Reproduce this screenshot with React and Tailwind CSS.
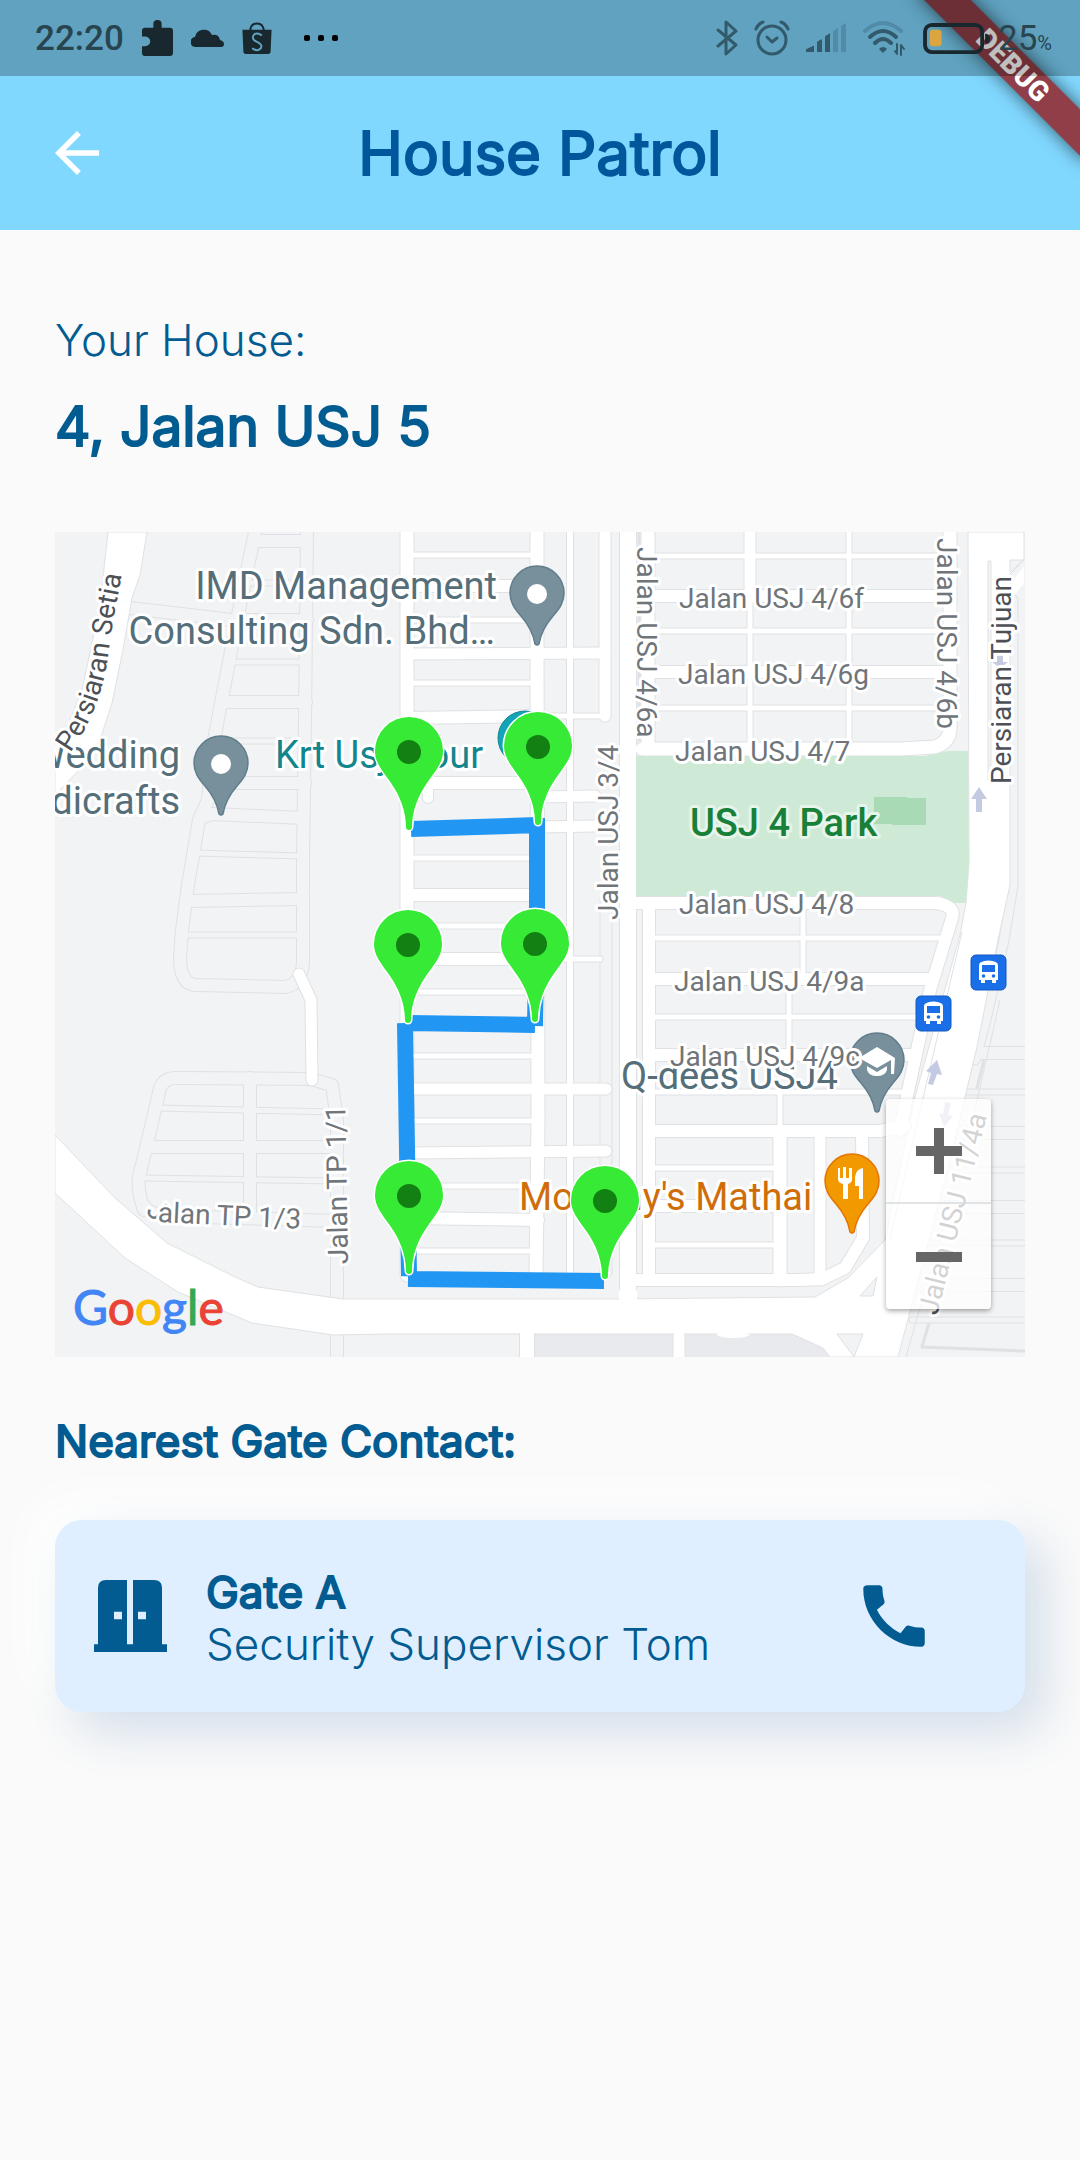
import React from "react";

const GROUND = "#f1f3f4";
const CASING = "#dfe1e4";

const STREETS = [
  // west block
  ["M407 532V1275", 13],
  ["M537 532V640L538 1120L536 1276", 13],
  ["M570 532V1276", 6],
  ["M605 532V716", 11],
  ["M628 532V1305", 16],
  ["M407 555H538", 5],
  ["M407 586H538", 12],
  ["M407 620H538", 5],
  ["M407 654L605 653", 11],
  ["M407 683H538", 5],
  ["M407 718L538 716", 12],
  ["M538 716H605", 5],
  ["M430 783H538", 12],
  ["M428 770V798", 10],
  ["M538 797L595 796", 11],
  ["M407 829L595 826", 11],
  ["M407 858H538", 5],
  ["M407 895H538", 12],
  ["M407 926H538", 5],
  ["M407 959H538", 12],
  ["M538 959H600", 5],
  ["M407 992H538", 5],
  ["M407 1024H538", 13],
  ["M407 1056H538", 5],
  ["M407 1089H606", 11],
  ["M407 1121H538", 5],
  ["M407 1153L606 1151", 11],
  ["M407 1186H538", 5],
  ["M407 1218L538 1220", 12],
  ["M407 1251H538", 5],
  // north-east block
  ["M648 532V749", 13],
  ["M642 749H900L935 747Q950 742 950 728V532", 13],
  ["M655 556H944", 5],
  ["M655 596H944", 12],
  ["M655 631H944", 5],
  ["M655 672H944", 12],
  ["M655 708H944", 5],
  ["M750 532V596", 11],
  ["M750 596V745", 5],
  ["M849 532V745", 5],
  // south-east block
  ["M649 903V1280", 12],
  ["M636 903H936Q956 906 952 918L930 990L905 1105L900 1130", 12],
  ["M655 938H940", 5],
  ["M655 979H932", 12],
  ["M655 1017H920", 5],
  ["M655 1055H914", 12],
  ["M655 1092H906", 5],
  ["M655 1131H880L905 1126", 12],
  ["M655 1168H780", 5],
  ["M655 1206H780", 12],
  ["M655 1245H780", 5],
  ["M628 1280H800L822 1279L845 1268L863 1238L862 1131", 12],
  ["M803 905V979", 5],
  ["M789 979V1055", 5],
  ["M780 1092V1131", 5],
  ["M780 1131V1280", 13],
  ["M820 1131V1280", 11],
  // south of the highway
  ["M527 1320V1360", 14],
  ["M679 1320V1360", 11],
];

const LANES = [
  ["M130 608L232 620", 12],
  ["M255 532L238 615L214 740L208 800L199 820L188 885L182 930L180 958Q180 984 196 985L285 987Q302 984 303 962L303 860L305 720L307 532", 12],
  ["M200 818L212 814L303 818", 12],
  ["M255 541H307", 12],
  ["M245 583H307", 5],
  ["M238 620H307", 12],
  ["M232 662H307", 5],
  ["M226 702H306", 12],
  ["M220 741H305", 5],
  ["M212 783H305", 12],
  ["M196 853L303 856", 5],
  ["M188 901L303 899", 12],
  ["M184 935H303", 5],
  ["M144 1210Q137 1190 139 1177L148 1140L160 1088Q164 1078 176 1078L310 1079L332 1085L337 1120V1360", 12],
  ["M144 1206Q152 1216 170 1216L337 1221", 12],
  ["M250 1078V1218", 12],
  ["M156 1108L337 1112", 5],
  ["M148 1147H337", 12],
  ["M142 1178L337 1181", 5],
  ["M606 900V1272", 11],
  ["M639 532V740", 1],
  ["M974 1053H1024", 12],
  ["M984 1060L976 1092", 1],
  ["M968 1092H1024", 5],
  ["M958 1133H1024", 12],
  ["M950 1170H1024", 5],
  ["M940 1207H1024", 12],
  ["M930 1243H1024", 5],
  ["M920 1285H1024", 12],
  ["M912 1320H1024", 5],
  ["M929 1323L922 1347L1024 1351", 1],
  ["M1013 600V885L1004 940L986 1020L975 1060", 9],
];

const HIGHWAYS = [
  "M108 532L100 605L82 690L70 720L55 747V795L83 766L100 740L112 703L123 650L132 598L140 575L147 532Z",
  "M55 1135L115 1198L167 1243L237 1278L258 1287L343 1299H620L815 1297L848 1278L885 1240L915 1097L960 935L966 903L969 863L968 532H1024V560L1010 574V885L998 940L977 1047L950 1160L898 1357H830L823 1348L792 1334H390L333 1335L252 1323L178 1292L125 1258L55 1193Z",
];

const ROAD_LABELS = [
  ["Jalan USJ 4/6f", 679, 608],
  ["Jalan USJ 4/6g", 678, 684],
  ["Jalan USJ 4/7", 675, 761],
  ["Jalan USJ 4/8", 679, 914],
  ["Jalan USJ 4/9a", 674, 991],
  ["Jalan USJ 4/9c", 670, 1066],
];

const TURNED_LABELS = [
  ["Jalan USJ 4/6a", 637, 547, 90, "#70757a"],
  ["Jalan USJ 4/6b", 937, 538, 90, "#70757a"],
  ["Jalan USJ 3/4", 618, 920, -90, "#70757a"],
  ["Jalan TP 1/1", 348, 1264, -91, "#70757a"],
  ["Persiaran Tujuan", 1011, 784, -90, "#4d5156"],
  ["Jalan USJ 11/4a", 937, 1316, -76, "#4d5156"],
];

const ROUTE = "M411 829L538 825M537 818V907L535 1026M409 1023L535 1025M405 1023L409 1276M408 1279L604 1281";

const PATROL_POINTS = [
  [409, 829],
  [538, 824],
  [408, 1022],
  [535, 1021],
  [409, 1273],
  [605, 1278],
];

function Roads({ roads, fill }) {
  return (
    <g fill="none" strokeLinejoin="round" strokeLinecap="round">
      {roads.map(([d, w], i) => (
        <path key={i} d={d} stroke={CASING} strokeWidth={w + 2} />
      ))}
      {roads.map(([d, w], i) => (
        <path key={i} d={d} stroke={w === 1 ? CASING : fill} strokeWidth={w} />
      ))}
    </g>
  );
}

function PlacePin({ x, y, fill, edge, children }) {
  return (
    <g transform={`translate(${x} ${y})`}>
      <path
        d="M-2 -1C-4 -13 -9 -21 -16 -29C-23 -37 -27 -43 -27 -52A27 27 0 0 1 27 -52C27 -43 23 -37 16 -29C9 -21 4 -13 2 -1Q0 1 -2 -1Z"
        fill={fill}
        stroke={edge}
        strokeWidth="1.5"
      />
      {children}
    </g>
  );
}

function PatrolPin({ x, y }) {
  return (
    <g transform={`translate(${x} ${y})`}>
      <path
        d="M-3 -2C-3 -18 -9 -33 -18 -46C-28 -60 -34 -67 -34 -78A34 34 0 0 1 34 -78C34 -67 28 -60 18 -46C9 -33 3 -18 3 -2A3 3 0 0 1 -3 -2Z"
        fill="#36ea36"
        stroke="#fff"
        strokeWidth="3"
        paintOrder="stroke"
      />
      <circle cy="-77" r="12" fill="#128012" />
    </g>
  );
}

function BusStop({ x, y }) {
  return (
    <g transform={`translate(${x} ${y})`}>
      <rect width="35" height="35" rx="5" fill="#1a6fe8" stroke="#1558c0" />
      <path d="M8 10Q8 6 17.500 5.500Q27 6 27 10V25H25V28H21V25H14V28H10V25H8Z" fill="#fff" />
      <rect x="11" y="10" width="13" height="7" fill="#1a6fe8" />
      <circle cx="12.500" cy="21" r="1.800" fill="#1a6fe8" />
      <circle cx="22.500" cy="21" r="1.800" fill="#1a6fe8" />
    </g>
  );
}

function PatrolMap() {
  return (
    <svg
      viewBox="55 532 970 825"
      className="block h-auto w-full font-[Roboto,sans-serif]"
      role="img"
      aria-label="Patrol route map"
    >
      <rect x="55" y="532" width="970" height="825" fill={GROUND} />
      <path d="M534 1334H673V1357H534ZM684 1334H792L823 1348L830 1357H684Z" fill="#e8eaed" />
      <Roads roads={LANES} fill={GROUND} />
      <g fill="#fff" stroke={CASING} strokeWidth="1">
        {HIGHWAYS.map((d) => (
          <path key={d} d={d} />
        ))}
      </g>
      <Roads roads={STREETS} fill="#fff" />
      <path d="M636 756H925L948 751H968L969 863L966 903H955L940 896H636Z" fill="#ceead6" />
      <path d="M874 797H907V798H926V825H892V824H874Z" fill="#a8dab5" />
      <Roads roads={[["M299 974L311 1000L312 1080", 11]]} fill="#fff" />
      <path d="M391 1300H619V1333H391ZM636 1300H810V1333H636Z" fill="#fff" />
      <path d="M519 1318H535V1333H519ZM672 1318H686V1333H672ZM619 1290H637V1320H619Z" fill="#fff" />
      <path d="M877 1277L860 1296H873ZM837 1334H863L854 1357ZM988 561H991V780H988ZM1010 560H1024L1010 572Z" fill={GROUND} stroke={CASING} />
      <path d="M716 1334Q724 1330 732 1331L750 1334Q748 1338 732 1338Q720 1338 716 1334Z" fill="#fff" />
      <path d="M1024 566L1013 580V596L1024 584Z" fill="#fff" />
      <path d="M962 932L912 1145L890 1238M1000 1000L968 1140L906 1357" fill="none" stroke={CASING} />
      <g fill="#c5cae3">
        <path d="M979 787L987 799H982V812H976V799H971Z" />
        <path d="M937 1060L942 1075L937 1074L933 1085L928 1084L931 1073L926 1071Z" />
        <path d="M997 655H1003V662H1008L1000 668L992 662H997Z" />
        <path d="M945 1102L951 1103L948 1115L953 1116L944 1127L939 1113L943 1114Z" />
      </g>

      <g fontSize="38" fill="#546e7a" stroke="#fff" strokeWidth="6" strokeLinejoin="round" paintOrder="stroke">
        <text x="497" y="599" textAnchor="end">IMD Management</text>
        <text x="495" y="644" textAnchor="end">Consulting Sdn. Bhd…</text>
        <text x="180" y="768" textAnchor="end">Wedding</text>
        <text x="180" y="814" textAnchor="end">Handicrafts</text>
        <text x="621" y="1089">Q-dees USJ4</text>
        <text x="275" y="768" fill="#12858d">{"Krt Usj\u00a0\u00a0Tour"}</text>
        <text x="519" y="1210" fill="#cf6d0a">Moorthy's Mathai</text>
        <text x="690" y="836" fill="#188038" stroke="#e6f4ea" fontWeight="500">USJ 4 Park</text>
      </g>

      <PlacePin x={537} y={645} fill="#78909c" edge="#607d8b">
        <circle cy="-51" r="10" fill="#fff" />
      </PlacePin>
      <PlacePin x={221} y={815} fill="#78909c" edge="#607d8b">
        <circle cy="-51" r="10" fill="#fff" />
      </PlacePin>
      <circle cx="525" cy="738" r="27" fill="#12a4b8" stroke="#12858d" />
      <PlacePin x={877} y={1112} fill="#78909c" edge="#607d8b">
        <path d="M0 -65L18 -54L17 -38H14V-52L0 -44L-18 -54ZM-10 -46L0 -40L10 -46V-42Q8 -36 0 -36Q-8 -36 -10 -42Z" fill="#fff" />
      </PlacePin>
      <PlacePin x={852} y={1233} fill="#f29900" edge="#e37400">
        <path d="M-14 -65H-12V-55H-9V-66H-6V-55H-3V-65H0V-54Q0 -50 -4 -49V-34H-9V-49Q-14 -50 -14 -54ZM11 -65V-34H7V-47H3V-56Q4 -64 11 -65Z" fill="#fff" />
      </PlacePin>

      <g fontSize="28" fill="#70757a" stroke="#fff" strokeWidth="6" strokeLinejoin="round" paintOrder="stroke">
        {ROAD_LABELS.map(([name, x, y]) => (
          <text key={name} x={x} y={y}>{name}</text>
        ))}
        {TURNED_LABELS.map(([name, x, y, angle, fill]) => (
          <text key={name} transform={`translate(${x} ${y}) rotate(${angle})`} fill={fill}>{name}</text>
        ))}
        <path id="setia-line" d="M70 753C92 722 104 690 109 650S118 600 125 555" fill="none" stroke="none" />
        <text fill="#4d5156">
          <textPath href="#setia-line">Persiaran Setia</textPath>
        </text>
        <path id="tp-line" d="M145 1213L157 1222L330 1230" fill="none" stroke="none" />
        <text>
          <textPath href="#tp-line">Jalan TP 1/3</textPath>
        </text>
      </g>

      <BusStop x={971} y={955} />
      <BusStop x={916} y={996} />

      <path d={ROUTE} fill="none" stroke="#2196f3" strokeWidth="16" />
      {PATROL_POINTS.map(([x, y]) => (
        <PatrolPin key={`${x}-${y}`} x={x} y={y} />
      ))}

      <text x="73" y="1325" fontSize="48" fontFamily="Lato, sans-serif" strokeWidth="1">
        <tspan fill="#4285f4" stroke="#4285f4">G</tspan>
        <tspan fill="#ea4335" stroke="#ea4335">o</tspan>
        <tspan fill="#fbbc04" stroke="#fbbc04">o</tspan>
        <tspan fill="#4285f4" stroke="#4285f4">g</tspan>
        <tspan fill="#34a853" stroke="#34a853">l</tspan>
        <tspan fill="#ea4335" stroke="#ea4335">e</tspan>
      </text>
    </svg>
  );
}

function StatusBar() {
  return (
    <div className="relative z-20 flex h-[76px] items-center justify-between bg-black/25 pr-7 pl-[35px] font-[Roboto,sans-serif] text-[#28444f]">
      <div className="flex items-center gap-[18px]">
        <span className="text-[35px] leading-none font-medium">22:20</span>
        <svg width="31" height="36" viewBox="0 0 30 37" preserveAspectRatio="none" fill="#18282e" aria-hidden="true">
          <path d="M11 8V4a4 4 0 0 1 8 0v4h8a3 3 0 0 1 3 3v23a3 3 0 0 1-3 3H3a3 3 0 0 1-3-3v-7h3a5 5 0 0 0 0-10H0v-6a3 3 0 0 1 3-3z" />
        </svg>
        <svg width="33" height="20" viewBox="0 0 33 20" fill="#18282e" aria-hidden="true">
          <path d="M5 19a5 5 0 0 1-1-10A9 9 0 0 1 21 7Q28 6 29 12Q33 13 33 16T30 19Z" />
        </svg>
        <svg width="30" height="33" viewBox="0 0 30 34" aria-hidden="true">
          <path d="M8 10Q8 1.500 15 1.500T22 10" fill="none" stroke="#18282e" strokeWidth="2" />
          <path d="M0 8H30L29 31Q29 33 26 33H4Q1 33 1 31Z" fill="#18282e" />
          <path d="M20 14Q15 10 11.500 13.500Q9 18 15 20.500T19 27Q15 31 10 27" fill="none" stroke="#62a2c0" strokeWidth="2" />
        </svg>
        <svg width="48" height="8" viewBox="-14 0 48 8" fill="#000" aria-hidden="true">
          <rect x="0" y="1" width="6" height="6" rx="2" />
          <rect x="14" y="1" width="6" height="6" rx="2" />
          <rect x="28" y="1" width="6" height="6" rx="2" />
        </svg>
      </div>
      <div className="flex items-center gap-4">
        <svg width="22" height="36" viewBox="0 0 22 36" fill="none" stroke="#335a6b" strokeWidth="3" strokeLinejoin="round" strokeLinecap="round" aria-hidden="true">
          <path d="M2 10L20 25L10 34V2L20 11L2 26" />
        </svg>
        <svg width="36" height="36" viewBox="0 0 36 36" fill="none" stroke="#335a6b" strokeWidth="3" strokeLinecap="round" strokeLinejoin="round" aria-hidden="true">
          <circle cx="18" cy="20" r="14" />
          <path d="M2 9Q4 4 9 2M34 9Q32 4 27 2M13 17L18 22L23 18" />
        </svg>
        <svg width="40" height="30" viewBox="0 0 40 32" preserveAspectRatio="none" fill="#335a6b" aria-hidden="true">
          <path d="M0 31V28L8 24V31ZM11 31V20L16 17V31ZM19 31V14L24 11V31Z" />
          <path d="M27 31V9L32 5V31ZM35 31V3L40 0V31Z" fill="#518ba7" />
        </svg>
        <svg width="44" height="36" viewBox="0 0 44 36" fill="none" strokeWidth="4" strokeLinecap="round" aria-hidden="true">
          <path d="M3 11Q21 -5 39 11" stroke="#518ba7" />
          <path d="M8 17Q21 5 34 17M13 23Q21 15 29 23" stroke="#335a6b" />
          <path d="M17 29Q21 25 25 29L21 33Z" fill="#335a6b" />
          <path d="M35 34V24M39 25V35M33 31L35 34M39 25L42 29" stroke="#335a6b" strokeWidth="2" />
        </svg>
        <svg width="70" height="31" viewBox="0 0 70 32" aria-hidden="true">
          <rect x="2" y="2" width="59" height="28" rx="7" fill="none" stroke="#18282e" strokeWidth="4" />
          <rect x="7" y="7" width="12" height="17" rx="3" fill="#dba63f" />
          <path d="M64 11Q69 11 69 16T64 21Z" fill="#18282e" />
        </svg>
        <span className="-ml-2.5 text-[35px] leading-none">
          25<span className="text-[20px]">%</span>
        </span>
      </div>
    </div>
  );
}

export default function App() {
  return (
    <div className="min-h-screen bg-[#fafafa] font-[Inter,sans-serif] text-[#025c91]">
      <header className="relative bg-[#80d8ff]">
        <div className="pointer-events-none absolute inset-0 z-10 overflow-hidden">
          <div className="absolute top-[49px] right-[-53px] flex h-[33px] w-[240px] rotate-45 items-center justify-center bg-[#93191a]/80 font-[Roboto,sans-serif] text-[28px] leading-none font-black text-white shadow-[0_0_18px_rgba(0,0,0,0.6)]">
            DEBUG
          </div>
        </div>
        <StatusBar />
        <div className="grid h-[154px] grid-cols-[66px_1fr_66px] items-center px-11">
          <button type="button" aria-label="Back" className="text-white">
            <svg width="66" height="66" viewBox="0 0 24 24" fill="currentColor" aria-hidden="true">
              <path d="M20 11H7.830l5.590-5.590L12 4l-8 8 8 8 1.410-1.410L7.830 13H20v-2z" />
            </svg>
          </button>
          <h1 className="text-center text-[60px] leading-[72px] text-[#01579b] [-webkit-text-stroke:2px_#01579b]">House Patrol</h1>
        </div>
      </header>

      <main className="px-[55px] pt-[84px]">
        <p className="text-[44px] leading-[52px] font-[350]">Your House:</p>
        <h2 className="mt-6 text-[55px] leading-[72px] [-webkit-text-stroke:2px_#025c91]">4, Jalan USJ 5</h2>

        <section className="relative mt-[70px]" aria-label="Map">
          <PatrolMap />
          <div className="absolute right-[34px] bottom-[48px] flex w-[105px] flex-col divide-y-2 divide-[#d5d7d9]/70 rounded bg-white/75 shadow-[0_2px_5px_rgba(0,0,0,0.35)]">
            <button type="button" aria-label="Zoom in" className="flex h-[105px] items-center justify-center">
              <svg width="46" height="46" viewBox="0 0 46 46" fill="#666" aria-hidden="true">
                <path d="M18 0H28V18H46V28H28V46H18V28H0V18H18Z" />
              </svg>
            </button>
            <button type="button" aria-label="Zoom out" className="flex h-[105px] items-center justify-center">
              <svg width="46" height="10" viewBox="0 0 46 10" fill="#666" aria-hidden="true">
                <path d="M0 0H46V10H0Z" />
              </svg>
            </button>
          </div>
        </section>

        <h3 className="mt-14 text-[44px] leading-[56px] [-webkit-text-stroke:2px_#025c91]">Nearest Gate Contact:</h3>

        <article className="mt-[51px] flex items-center rounded-[27px] bg-[#dfefff] py-[42px] pr-[90px] pl-[39px] shadow-[20px_20px_50px_#d3deea,-20px_-20px_50px_#ffffff]">
          <svg width="73" height="72" viewBox="0 0 73 75" preserveAspectRatio="none" fill="currentColor" className="shrink-0" aria-hidden="true">
            <path d="M4 67V8Q4 0 12 0H33V67H39V0H60Q68 0 68 8V67H73V75H0V67Z M20 33V41H28V33ZM44 33V41H52V33Z" fillRule="evenodd" />
          </svg>
          <div className="ml-[39px] flex-1 pt-1 text-[44px] leading-[52px]">
            <p className="[-webkit-text-stroke:2px_#025c91]">Gate A</p>
            <p className="font-[350]">Security Supervisor Tom</p>
          </div>
          <button type="button" aria-label="Call Security Supervisor Tom">
            <svg width="82" height="82" viewBox="0 0 24 24" fill="currentColor" aria-hidden="true">
              <path d="M20.010 15.380c-1.230 0-2.420-.2-3.530-.56-.35-.12-.74-.03-1.010.24l-1.570 1.970c-2.830-1.350-5.480-3.900-6.890-6.830l1.950-1.660c.27-.28.35-.67.24-1.020-.37-1.110-.56-2.300-.56-3.530 0-.54-.45-.99-.99-.99H4.190C3.650 3 3 3.240 3 3.990 3 13.280 10.730 21 20.010 21c.71 0 .99-.63.99-1.180v-3.450c0-.54-.45-.99-.99-.99z" />
            </svg>
          </button>
        </article>
      </main>
    </div>
  );
}
